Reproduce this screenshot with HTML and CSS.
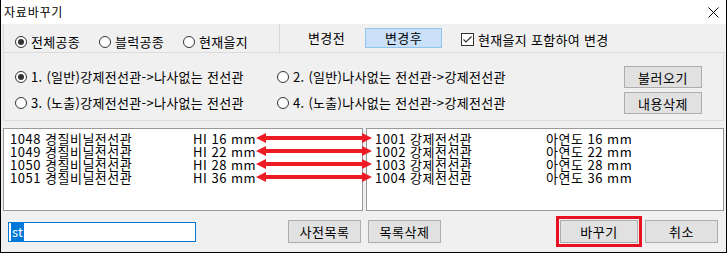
FILE: index.html
```html
<!DOCTYPE html>
<html lang="ko">
<head>
    <meta charset="UTF-8">
    <title>자료바꾸기</title>
    <link rel="stylesheet" href="styles.css">
</head>
<body>
    <div class="window">
        <div class="titlebar">
            <span>자료바꾸기</span>
            <svg class="close" width="11" height="11" viewBox="0 0 11 11">
                <path d="M0.5 0.5 L10.5 10.5 M10.5 0.5 L0.5 10.5" stroke="#000" stroke-width="1" fill="none"/>
            </svg>
        </div>

        <div class="content">
            <div class="toprow">
                <div class="scope">
                    <label class="radio on"><span class="dot"></span>전체공종</label>
                    <label class="radio"><span class="dot"></span>블럭공종</label>
                    <label class="radio"><span class="dot"></span>현재을지</label>
                </div>
                <span class="tab">변경전</span>
                <span class="tab active">변경후</span>
                <label class="check">
                    <svg class="box" width="13" height="13" viewBox="0 0 13 13">
                        <rect x="0.5" y="0.5" width="12" height="12" fill="#fff" stroke="#333"/>
                        <path d="M2.5 6.5 L5 9 L10.5 3.5" stroke="#333" stroke-width="1.2" fill="none"/>
                    </svg>
                    현재을지 포함하여 변경
                </label>
            </div>

            <div class="panel">
                <label class="radio on"><span class="dot"></span>1. (일반)강제전선관-&gt;나사없는 전선관</label>
                <label class="radio"><span class="dot"></span>2. (일반)나사없는 전선관-&gt;강제전선관</label>
                <button class="btn">불러오기</button>
                <label class="radio"><span class="dot"></span>3. (노출)강제전선관-&gt;나사없는 전선관</label>
                <label class="radio"><span class="dot"></span>4. (노출)나사없는 전선관-&gt;강제전선관</label>
                <button class="btn">내용삭제</button>
            </div>

            <div class="lists">
                <div class="list left">
                    <div class="row"><span>1048 경질비닐전선관</span><span>HI 16 mm</span></div>
                    <div class="row"><span>1049 경질비닐전선관</span><span>HI 22 mm</span></div>
                    <div class="row"><span>1050 경질비닐전선관</span><span>HI 28 mm</span></div>
                    <div class="row"><span>1051 경질비닐전선관</span><span>HI 36 mm</span></div>
                </div>
                <div class="list right">
                    <div class="row"><span>1001 강제전선관</span><span>아연도 16 mm</span></div>
                    <div class="row"><span>1002 강제전선관</span><span>아연도 22 mm</span></div>
                    <div class="row"><span>1003 강제전선관</span><span>아연도 28 mm</span></div>
                    <div class="row"><span>1004 강제전선관</span><span>아연도 36 mm</span></div>
                </div>
                <!-- annotation arrows drawn over both lists -->
                <svg class="arrows" width="118" height="62" viewBox="0 0 118 62">
                    <g fill="#ed1c24">
                        <path d="M0 10 L10 5 L10 8 L106 8 L106 5 L116 10 L106 15 L106 12 L10 12 L10 15 Z"/>
                        <path d="M0 23 L10 18 L10 21 L106 21 L106 18 L116 23 L106 28 L106 25 L10 25 L10 28 Z"/>
                        <path d="M0 36 L10 31 L10 34 L106 34 L106 31 L116 36 L106 41 L106 38 L10 38 L10 41 Z"/>
                        <path d="M0 49 L10 44 L10 47 L106 47 L106 44 L116 49 L106 54 L106 51 L10 51 L10 54 Z"/>
                    </g>
                </svg>
            </div>

            <div class="bottom">
                <div class="field"><span class="sel">st</span></div>
                <button class="btn dict">사전목록</button>
                <button class="btn">목록삭제</button>
                <div class="focus"><button class="btn">바꾸기</button></div>
                <button class="btn">취소</button>
            </div>
        </div>
    </div>
</body>
</html>
```

FILE: styles.css
```css
body {
    margin: 0;
    font-family: "Noto Sans CJK KR", "Noto Sans", sans-serif;
    font-size: 13px;
    letter-spacing: 0.3px;
    color: #000;
}

.window {
    width: 727px;
    height: 253px;
    box-sizing: border-box;
    border: 1px solid #000;
    border-top: none;
    background: #f0f0f0;
    display: flex;
    flex-direction: column;
}

.titlebar {
    height: 24px;
    flex: none;
    background: #fff;
    display: flex;
    align-items: center;
    justify-content: space-between;
    padding: 0 7px 0 3px;
    font-size: 12px;
    letter-spacing: 0.8px;
    line-height: 16px;
}

.content {
    padding: 0 2px;
    display: flex;
    flex-direction: column;
}

/* top row */
.toprow {
    height: 28px;
    display: flex;
    align-items: center;
}

.scope {
    height: 28px;
    width: 277px;
    box-sizing: border-box;
    border-left: 1px solid #d9d9d9;
    border-right: 1px solid #d9d9d9;
    padding: 7px 0 0 11px;
    display: flex;
    align-items: center;
    gap: 19px;
}

.radio {
    display: flex;
    align-items: center;
    gap: 4px;
    line-height: 16px;
    white-space: nowrap;
}

.dot {
    width: 12px;
    height: 12px;
    flex: none;
    box-sizing: border-box;
    border: 1px solid #333;
    border-radius: 50%;
    background: #fff;
    display: grid;
    place-items: center;
}

.radio.on .dot::after {
    content: "";
    width: 6px;
    height: 6px;
    border-radius: 50%;
    background: #333;
}

.tab {
    width: 77px;
    height: 20px;
    box-sizing: border-box;
    text-align: center;
    line-height: 18px;
    border: 1px solid transparent;
}

.tab:first-of-type {
    margin-left: 8px;
}

.tab.active {
    background: #c9e0f7;
    border-color: #92c6f2;
}

.check {
    margin-left: 19px;
    padding-top: 3px;
    display: flex;
    align-items: center;
    gap: 4px;
    line-height: 16px;
}

/* option panel */
.panel {
    height: 69px;
    box-sizing: border-box;
    border: 1px solid #dcdcdc;
    padding: 13px 21px 6px 11px;
    display: grid;
    grid-template-columns: 262px 1fr 78px;
    grid-template-rows: 22px 22px;
    row-gap: 4px;
    align-items: center;
}

.btn {
    height: 23px;
    box-sizing: border-box;
    background: #e1e1e1;
    border: 1px solid #adadad;
    font-family: inherit;
    font-size: 13px;
    letter-spacing: 0.5px;
    color: #000;
    padding: 0;
    line-height: 19px;
}

.panel .btn {
    height: 22px;
    width: 78px;
}

/* lists */
.lists {
    position: relative;
    margin-top: 7px;
    height: 83px;
    display: flex;
    gap: 3px;
}

.list {
    background: #fff;
    border: 1px solid #999;
    box-sizing: border-box;
    padding-top: 3px;
    font-size: 13px;
    letter-spacing: 0.5px;
    line-height: 13px;
}

.list.left {
    width: 360px;
    padding-left: 6px;
}

.list.right {
    flex: 1;
    padding-left: 8px;
}

.row {
    display: grid;
    white-space: nowrap;
}

.left .row {
    grid-template-columns: 183px 1fr;
}

.right .row {
    grid-template-columns: 171px 1fr;
}

.arrows {
    position: absolute;
    left: 253px;
    top: 0;
}

/* bottom row */
.bottom {
    height: 41px;
    display: flex;
    align-items: center;
    padding: 0 6px 2px 5px;
}

.field {
    width: 188px;
    height: 20px;
    box-sizing: border-box;
    border: 1px solid #0078d7;
    background: #fff;
    padding: 1px 0 0 2px;
    line-height: 16px;
}

.sel {
    background: #0078d7;
    color: #fff;
    padding: 0 1px;
}

.bottom .btn {
    width: 73px;
}

.bottom .dict {
    margin-left: 92px;
    margin-right: 7px;
}

.focus {
    margin-left: auto;
    margin-right: 3px;
    border: 3px solid #e81123;
    padding: 1px 1px;
    display: flex;
}

.focus .btn {
    width: 78px;
}
```
